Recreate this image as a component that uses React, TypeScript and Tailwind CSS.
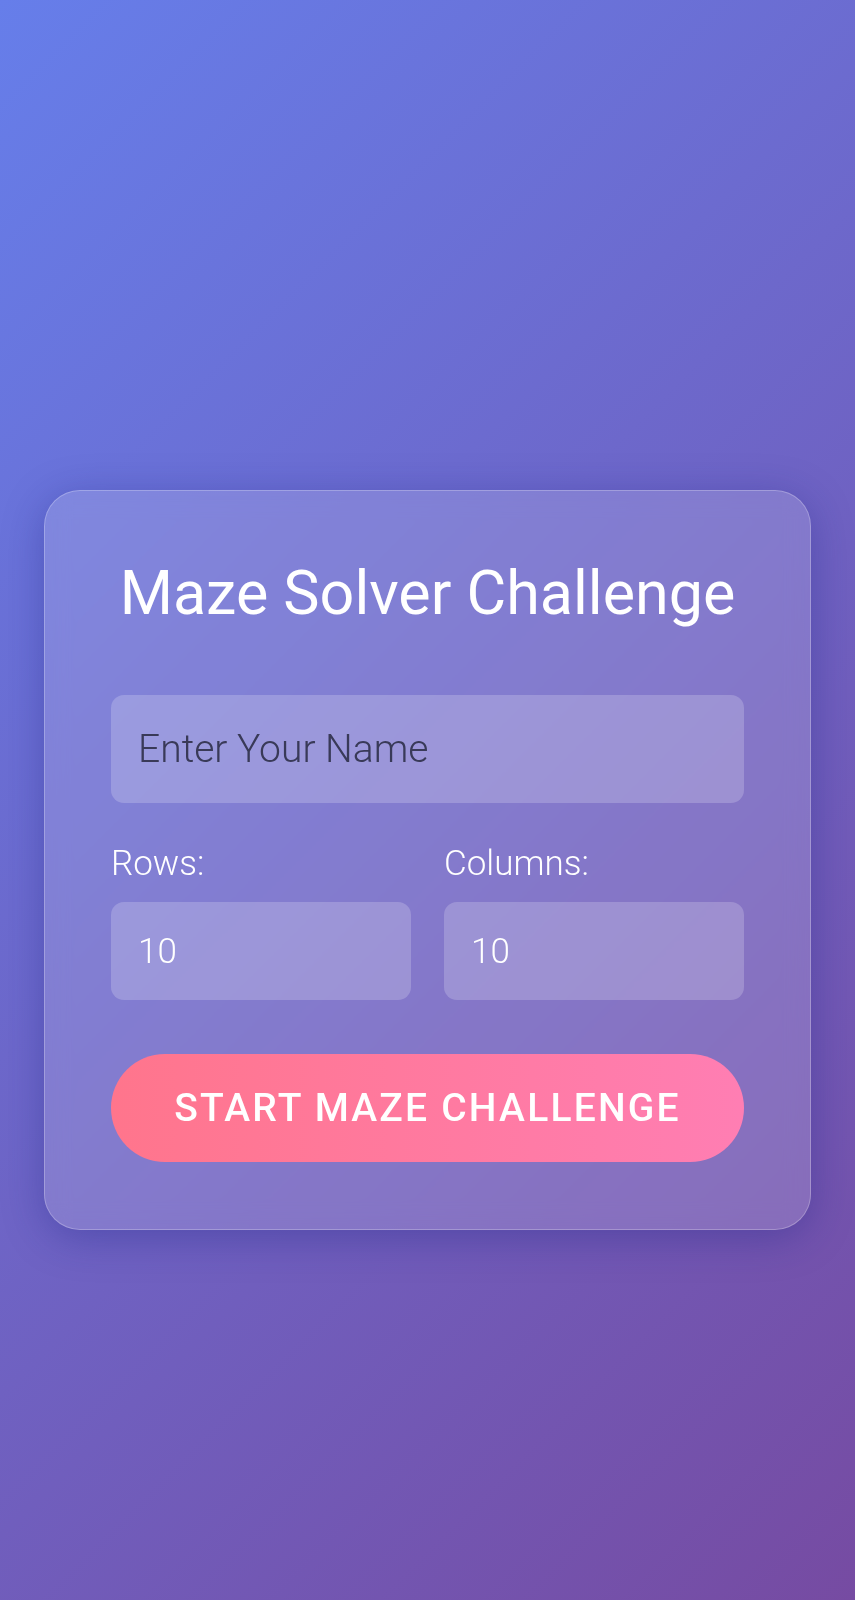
import React, { useState } from 'react';

export default function App() {
  const [name, setName] = useState('');
  const [rows, setRows] = useState('10');
  const [cols, setCols] = useState('10');

  return (
    <div
      className="min-h-[1600px] w-full flex flex-col justify-center px-[44px] pt-[120px] bg-[linear-gradient(135deg,#667eea_0%,#764ba2_100%)]"
      style={{ fontFamily: 'Roboto, "Liberation Sans", sans-serif' }}
    >
      <div className="w-full rounded-[36px] border border-white/25 bg-white/15 px-[66px] py-[67px] shadow-[0_8px_40px_rgba(31,38,135,0.37)] backdrop-blur-md">
        <h1 className="text-center text-[61px] font-normal leading-[70px] text-white">
          Maze Solver Challenge
        </h1>

        <input
          value={name}
          onChange={(e) => setName(e.target.value)}
          placeholder="Enter Your Name"
          className="mt-[67px] block h-[108px] w-full rounded-[13px] bg-white/20 px-[27px] text-[39px] font-light text-white outline-none placeholder:text-[#393a58]"
        />

        <div className="mt-[40px] grid grid-cols-2 gap-[33px]">
          <div className="flex flex-col">
            <label className="text-[35px] font-light leading-[41px] text-white">Rows:</label>
            <input
              value={rows}
              onChange={(e) => setRows(e.target.value)}
              className="mt-[18px] block h-[98px] w-full rounded-[13px] bg-white/20 px-[27px] text-[35px] font-light text-white outline-none"
            />
          </div>
          <div className="flex flex-col">
            <label className="text-[35px] font-light leading-[41px] text-white">Columns:</label>
            <input
              value={cols}
              onChange={(e) => setCols(e.target.value)}
              className="mt-[18px] block h-[98px] w-full rounded-[13px] bg-white/20 px-[27px] text-[35px] font-light text-white outline-none"
            />
          </div>
        </div>

        <button className="mt-[54px] flex h-[108px] w-full items-center justify-center rounded-full bg-[linear-gradient(90deg,#ff758c_0%,#ff7eb3_100%)] text-[39px] font-medium uppercase tracking-[2.2px] text-white">
          Start Maze Challenge
        </button>
      </div>
    </div>
  );
}
